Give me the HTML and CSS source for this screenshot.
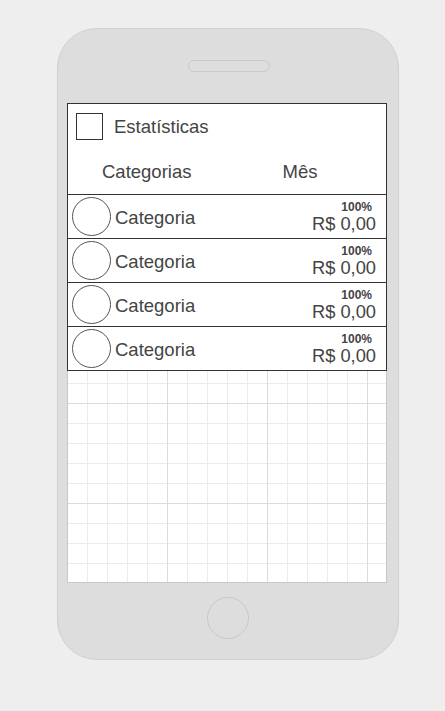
FILE: index.html
```html
<!DOCTYPE html>
<html lang="pt">
<head>
<meta charset="utf-8">
<title>Estatísticas</title>
<link rel="stylesheet" href="styles.css">
</head>
<body>
<div class="phone">
  <div class="speaker"></div>
  <div class="screen">
    <div class="panel">
      <div class="header">
        <div class="title-row">
          <div class="checkbox"></div>
          <div class="title">Estatísticas</div>
        </div>
        <div class="cols">
          <div class="col col-cat">Categorias</div>
          <div class="col col-mes">Mês</div>
        </div>
      </div>
      <div class="rows">
        <div class="row">
          <div class="avatar"></div>
          <div class="label">Categoria</div>
          <div class="values"><div class="pct">100%</div><div class="amount">R$ 0,00</div></div>
        </div>
        <div class="row">
          <div class="avatar"></div>
          <div class="label">Categoria</div>
          <div class="values"><div class="pct">100%</div><div class="amount">R$ 0,00</div></div>
        </div>
        <div class="row">
          <div class="avatar"></div>
          <div class="label">Categoria</div>
          <div class="values"><div class="pct">100%</div><div class="amount">R$ 0,00</div></div>
        </div>
        <div class="row">
          <div class="avatar"></div>
          <div class="label">Categoria</div>
          <div class="values"><div class="pct">100%</div><div class="amount">R$ 0,00</div></div>
        </div>
      </div>
    </div>
    <div class="grid"></div>
  </div>
  <div class="home"></div>
</div>
</body>
</html>
```

FILE: styles.css
```css
* { box-sizing: border-box; }
html, body { margin: 0; padding: 0; }
body {
  background: #eeeeee;
  font-family: "Liberation Sans", Arial, sans-serif;
  color: #444444;
}
.phone {
  width: 342px;
  height: 632px;
  margin: 28px 0 0 57px;
  background: #dddddd;
  border: 1px solid #cfcfcf;
  border-radius: 40px;
  display: flex;
  flex-direction: column;
  align-items: center;
}
.speaker {
  width: 82px;
  height: 12px;
  margin-top: 31px;
  border: 1px solid #cacaca;
  border-radius: 6px;
  margin-left: 1px;
}
.screen {
  width: 320px;
  height: 480px;
  margin-top: 31px;
  align-self: flex-start;
  margin-left: 9px;
  display: flex;
  flex-direction: column;
}
.panel {
  background: #ffffff;
  border: 1px solid #333333;
  height: 268px;
  display: flex;
  flex-direction: column;
}
.header {
  height: 90px;
  border-bottom: 1px solid #333333;
  box-sizing: content-box;
  display: flex;
  flex-direction: column;
}
.title-row {
  display: flex;
  align-items: center;
  margin-top: 9px;
  margin-left: 8px;
}
.checkbox {
  width: 27px;
  height: 27px;
  border: 1px solid #333333;
}
.title {
  margin-left: 11px;
  font-size: 18.5px;
  line-height: 21px;
}
.cols {
  display: flex;
  margin-top: 21px;
  font-size: 18.5px;
  line-height: 21px;
}
.col-cat { margin-left: 34px; }
.col-mes { margin-left: 91px; }
.rows { display: flex; flex-direction: column; }
.row {
  height: 44px;
  border-bottom: 1px solid #333333;
  display: flex;
  align-items: center;
}
.row:last-child { border-bottom: none; height: 43px; }
.avatar {
  width: 39px;
  height: 39px;
  border: 1px solid #555555;
  border-radius: 50%;
  margin-left: 4px;
  flex: none;
}
.label {
  margin-left: 4px;
  font-size: 18.5px;
  line-height: 20px;
  padding-top: 3px;
}
.values {
  margin-left: auto;
  margin-right: 10px;
  text-align: right;
  padding-top: 1px;
}
.pct {
  font-size: 12px;
  font-weight: bold;
  line-height: 13px;
  margin-right: 4px;
}
.amount {
  font-size: 18.3px;
  line-height: 20px;
}
.grid {
  flex: 1;
  border: 1px solid #c8c8c8;
  border-top: none;
  background-color: #ffffff;
  background-image:
    linear-gradient(to right, #dcdcdc 1px, transparent 1px),
    linear-gradient(to bottom, #dcdcdc 1px, transparent 1px),
    linear-gradient(to right, #ebebeb 1px, transparent 1px),
    linear-gradient(to bottom, #ebebeb 1px, transparent 1px);
  background-size: 100px 100px, 100px 100px, 20px 20px, 20px 20px;
  background-position: 99px 0, 0 32px, 19px 0, 0 12px;
}
.home {
  width: 42px;
  height: 42px;
  border: 1px solid #c8c8c8;
  border-radius: 50%;
  margin-top: 14px;
}
```
